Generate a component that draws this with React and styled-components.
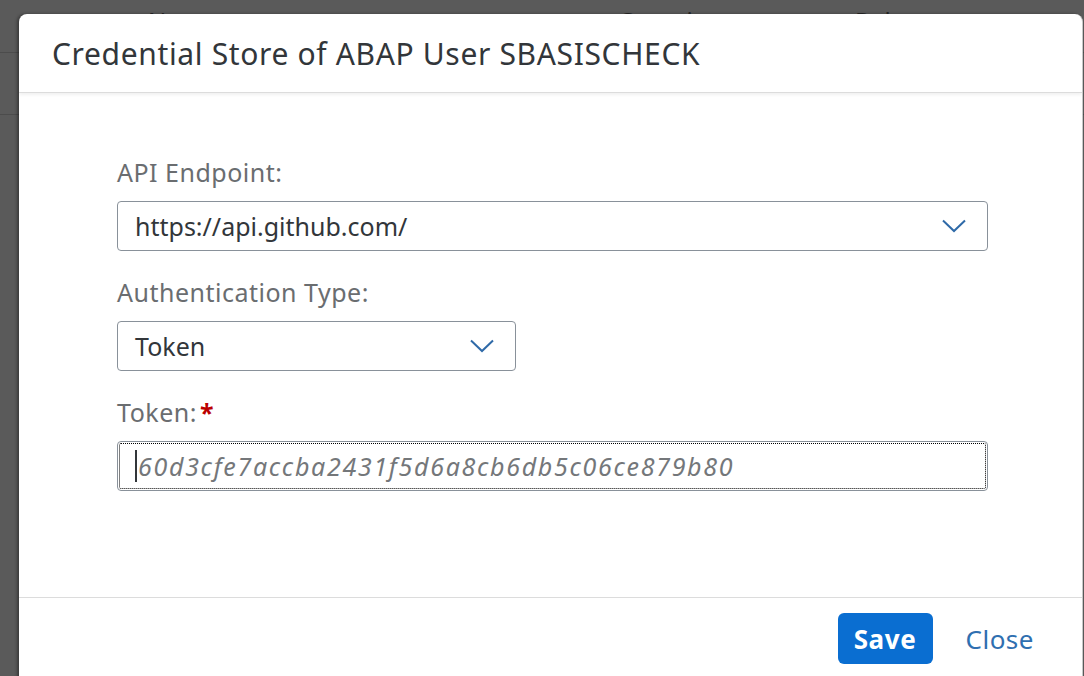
import React from "react";
import styled, { createGlobalStyle } from "styled-components";

const Global = createGlobalStyle`
  html, body { margin: 0; padding: 0; height: 100%; overflow: hidden; }
  body { background: #5a5a5a; font-family: "Noto Sans", "Open Sans", Arial, sans-serif; }
  #root { height: 100%; }
`;

const Page = styled.div`
  position: relative;
  height: 676px;
  overflow: hidden;
  background: #5a5a5a;
`;

const BgHeader = styled.div`
  display: flex;
  padding: 6px 0 0 148px;
  height: 46px;
  border-bottom: 1px solid #4c4c4c;
`;

const BgCol = styled.div`
  width: ${(p) => p.$w}px;
  font-size: 24px;
  line-height: 30px;
  color: #262626;
`;

const BgRow = styled.div`
  height: 61px;
  border-bottom: 1px solid #4c4c4c;
`;

const Overlay = styled.div`
  position: absolute;
  inset: 0;
  display: flex;
  align-items: flex-start;
  padding: 14px 0 0 19px;
`;

const Dialog = styled.div`
  width: 1063px;
  height: 680px;
  background: #fff;
  border-radius: 8px 8px 0 0;
  border-right: 1px solid #c8c8c8;
  box-shadow: -2px 0 3px rgba(0, 0, 0, 0.35);
  display: flex;
  flex-direction: column;
  overflow: hidden;
`;

const Header = styled.div`
  height: 78px;
  flex: none;
  display: flex;
  align-items: center;
  padding-left: 33px;
  border-bottom: 1px solid #dcdcdc;
  box-shadow: 0 2px 3px rgba(0, 0, 0, 0.06);
  position: relative;
  z-index: 1;
`;

const Title = styled.h1`
  margin: 0;
  font-weight: 400;
  font-size: 30px;
  color: #32363a;
  letter-spacing: 0.65px;
`;

const Content = styled.div`
  height: 440px;
  flex: none;
  padding: 64px 0 0 98px;
  display: flex;
  flex-direction: column;
  border-bottom: 1px solid #dcdcdc;
`;

const Field = styled.div`
  display: flex;
  flex-direction: column;
  margin-bottom: 26px;
`;

const Label = styled.label`
  font-size: 25px;
  line-height: 30px;
  color: #6a6d70;
  letter-spacing: 0.5px;
  margin-bottom: 14px;
`;

const Required = styled.span`
  color: #bb0000;
  margin-left: 3px;
  font-weight: 700;
`;

const Box = styled.div`
  box-sizing: border-box;
  width: ${(p) => p.$w}px;
  height: 50px;
  border: 1px solid #89919a;
  border-radius: 4px;
  display: flex;
  align-items: center;
  padding: 0 21px 0 17px;
  font-size: 25px;
  color: #32363a;
  background: #fff;
  position: relative;
`;

const Value = styled.span`
  flex: 1;
`;

const FocusRing = styled.div`
  position: absolute;
  inset: 1px;
  border: 1px dotted #000;
  border-radius: 2px;
  pointer-events: none;
`;

const Placeholder = styled.span`
  font-style: italic;
  color: #74777a;
  letter-spacing: 1.7px;
  display: flex;
  align-items: center;
`;

const Caret = styled.span`
  display: inline-block;
  width: 2px;
  height: 32px;
  background: #32363a;
  margin-right: 1px;
`;

const Footer = styled.div`
  flex: none;
  display: flex;
  justify-content: flex-end;
  align-items: flex-start;
  padding: 15px 48px 0 0;
  gap: 33px;
`;

const SaveButton = styled.button`
  width: 95px;
  height: 51px;
  border: none;
  border-radius: 6px;
  background: #0a6ed1;
  color: #fff;
  font-family: inherit;
  font-weight: 700;
  font-size: 26px;
  letter-spacing: 0.6px;
  padding: 0;
`;

const LinkButton = styled.button`
  border: none;
  background: transparent;
  color: #2f6fb0;
  font-family: inherit;
  font-size: 26px;
  letter-spacing: 0.5px;
  height: 51px;
  padding: 0;
`;

const Chevron = () => (
  <svg width="24" height="14" viewBox="0 0 24 14" fill="none">
    <path d="M1 1.5 L12 12 L23 1.5" stroke="#2f6aa8" strokeWidth="2" />
  </svg>
);

export default function App() {
  return (
    <>
      <Global />
      <Page>
        <BgHeader aria-hidden="true">
          <BgCol $w={470}>Name</BgCol>
          <BgCol $w={237}>Capacity</BgCol>
          <BgCol $w={200}>Role</BgCol>
        </BgHeader>
        <BgRow />
        <Overlay>
          <Dialog role="dialog">
            <Header>
              <Title>Credential Store of ABAP User SBASISCHECK</Title>
            </Header>
            <Content>
              <Field>
                <Label>API Endpoint:</Label>
                <Box $w={871}>
                  <Value>https://api.github.com/</Value>
                  <Chevron />
                </Box>
              </Field>
              <Field>
                <Label>Authentication Type:</Label>
                <Box $w={399}>
                  <Value>Token</Value>
                  <Chevron />
                </Box>
              </Field>
              <Field>
                <Label>
                  Token:<Required>*</Required>
                </Label>
                <Box $w={871}>
                  <FocusRing />
                  <Placeholder>
                    <Caret />
                    60d3cfe7accba2431f5d6a8cb6db5c06ce879b80
                  </Placeholder>
                </Box>
              </Field>
            </Content>
            <Footer>
              <SaveButton>Save</SaveButton>
              <LinkButton>Close</LinkButton>
            </Footer>
          </Dialog>
        </Overlay>
      </Page>
    </>
  );
}
